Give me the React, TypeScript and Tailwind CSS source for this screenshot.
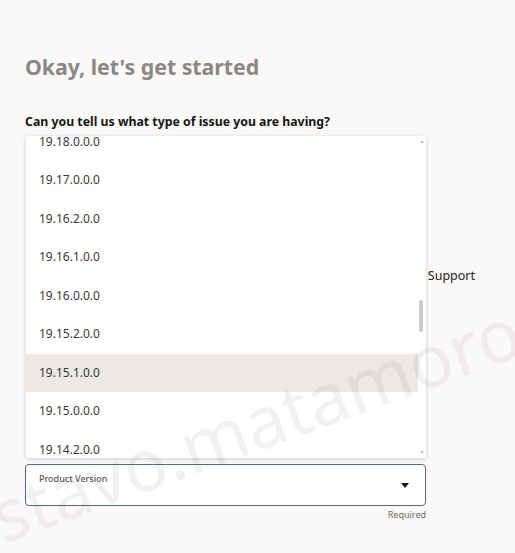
import React from "react";

const versions = [
	"19.18.0.0.0",
	"19.17.0.0.0",
	"19.16.2.0.0",
	"19.16.1.0.0",
	"19.16.0.0.0",
	"19.15.2.0.0",
	"19.15.1.0.0",
	"19.15.0.0.0",
	"19.14.2.0.0",
];

export default function App() {
	return (
		<div
			className="relative h-[553px] w-[515px] overflow-hidden bg-[#fbf9f8] text-[#161513]"
			style={{ fontFamily: '"Noto Sans", "Open Sans", sans-serif' }}
		>
			<div className="flex flex-col px-[25px] pt-[53px]">
				<h1 className="text-[21.3px] font-bold leading-[28px] text-[#8b8785]">Okay, let's get started</h1>
				<p className="mt-[32px] text-[12.3px] font-bold leading-[18px] text-[#161513]">
					Can you tell us what type of issue you are having?
				</p>

				<div className="flex h-[333px] items-center justify-end pr-[15px]">
					<span className="mt-[-42px] text-[12.5px] text-[#222]">Support</span>
				</div>

				<div className="w-[401px]">
					<div className="relative">
						{/* listbox popup */}
						<div className="absolute bottom-full left-[1px] mb-[6px] flex h-[322px] w-[400px] overflow-hidden rounded-t-[3px] bg-white shadow-[0_1px_4px_rgba(0,0,0,0.18)]">
							<ul className="mt-[-13.5px] flex-1">
								{versions.map((v) => (
									<li
										key={v}
										className={
											"flex h-[38.5px] items-center pl-[13px] text-[12px] text-[#3a3836] " +
											(v === "19.15.1.0.0" ? "bg-[#ebe8e6]" : "")
										}
									>
										{v}
									</li>
								))}
							</ul>
							<div className="relative w-[8px]">
								<div className="absolute left-[2px] top-[4px] h-0 w-0 border-x-[2.5px] border-b-[3px] border-x-transparent border-b-[#c8c5c3]" />
								<div className="absolute left-[1px] top-[164px] h-[32px] w-[4px] rounded-full bg-[#cdcac8]" />
								<div className="absolute bottom-[4px] left-[2px] h-0 w-0 border-x-[2.5px] border-t-[3px] border-x-transparent border-t-[#c8c5c3]" />
							</div>
						</div>

						<div className="flex h-[42px] items-start justify-between rounded-[4px] border border-[#4f6b7e] bg-white pl-[13px] pr-[16px]">
							<span className="mt-[8px] text-[9px] font-medium leading-[12px] text-[#5a5755]">Product Version</span>
							<div className="mt-[18px] h-0 w-0 border-x-[4px] border-t-[5px] border-x-transparent border-t-[#161513]" />
						</div>
					</div>
					<div className="mt-[3px] text-right text-[9px] leading-[12px] text-[#6b6866]">Required</div>
				</div>
			</div>

			{/* watermark */}
			<span className="pointer-events-none absolute left-[-90px] top-[512px] origin-left -rotate-[20deg] whitespace-nowrap text-[72px] leading-none text-[rgba(60,40,40,0.065)]">
				gustavo.matamoros
			</span>
		</div>
	);
}
